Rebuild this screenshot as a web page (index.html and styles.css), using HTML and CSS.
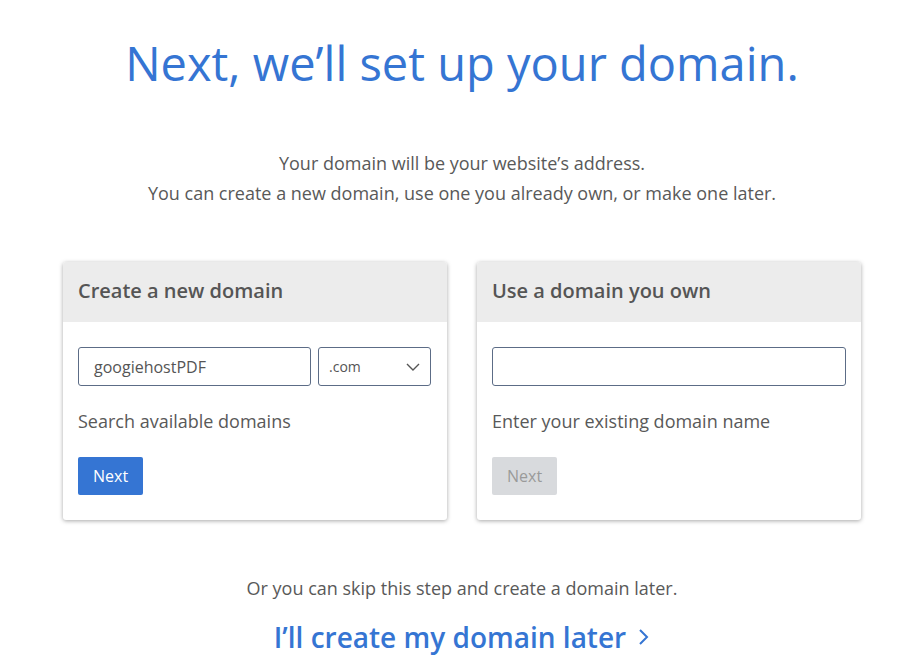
FILE: index.html
```html
<!DOCTYPE html>
<html lang="en">
<head>
<meta charset="utf-8">
<title>Set up your domain</title>
<link rel="stylesheet" href="styles.css">
</head>
<body>
<main class="page">
  <h1 class="title">Next, we’ll set up your domain.</h1>
  <p class="intro">Your domain will be your website’s address.<br>You can create a new domain, use one you already own, or make one later.</p>
  <div class="cards">
    <section class="card">
      <header class="card-head">Create a new domain</header>
      <div class="card-body">
        <div class="row">
          <div class="input name">googiehostPDF</div>
          <div class="input select"><span>.com</span>
            <svg class="chev" width="14" height="8" viewBox="0 0 14 8"><path d="M1 1l6 6 6-6" fill="none" stroke="#555" stroke-width="1.4"/></svg>
          </div>
        </div>
        <p class="hint">Search available domains</p>
        <button class="btn primary">Next</button>
      </div>
    </section>
    <section class="card">
      <header class="card-head">Use a domain you own</header>
      <div class="card-body">
        <div class="row">
          <div class="input full"></div>
        </div>
        <p class="hint">Enter your existing domain name</p>
        <button class="btn disabled">Next</button>
      </div>
    </section>
  </div>
  <p class="skip">Or you can skip this step and create a domain later.</p>
  <a class="later" href="#">I’ll create my domain later <svg class="arrow" width="12" height="18" viewBox="0 0 12 18"><path d="M2 2l7 7-7 7" fill="none" stroke="#3575d3" stroke-width="2"/></svg></a>
</main>
</body>
</html>
```
FILE: styles.css
```css
* { box-sizing: border-box; }
html, body { margin: 0; background: #fff; }
body { font-family: "Open Sans", "Liberation Sans", sans-serif; color: #595959; }
.page { display: flex; flex-direction: column; align-items: center; padding-top: 30px; }
.title { margin: 0; font-weight: 400; font-size: 47px; line-height: 66px; color: #3575d3; letter-spacing: 0; }
.intro { margin: 52px 0 0; text-align: center; font-size: 18px; line-height: 30px; color: #595959; }
.cards { display: flex; gap: 30px; margin-top: 54px; }
.card { width: 384px; background: #fff; border-radius: 3px; box-shadow: 0 1px 4px rgba(0,0,0,0.35); overflow: hidden; }
.card-head { height: 60px; background: #ececec; padding: 0 15px 3px; display: flex; align-items: center; font-size: 20px; font-weight: 600; color: #555; }
.card-body { padding: 25px 15px 25px; }
.row { display: flex; gap: 7px; height: 39px; }
.input { border: 1px solid #5c6c86; border-radius: 3px; height: 39px; display: flex; align-items: center; font-size: 16px; color: #555; }
.name { width: 233px; padding-left: 15px; }
.select { width: 113px; padding: 0 10px; justify-content: space-between; font-size: 14px; }
.full { width: 354px; }
.hint { margin: 0; padding-top: 22px; font-size: 18px; line-height: 26px; color: #595959; }
.btn { margin-top: 23px; height: 38px; padding: 0 15px; border: 0; border-radius: 2px; font-family: inherit; font-size: 16px; }
.primary { background: #3575d3; color: #fff; }
.disabled { background: #d8dadd; color: #9a9a9a; }
.skip { margin: 55px 0 0; font-size: 18px; line-height: 26px; color: #595959; }
.later { margin-top: 18px; font-size: 28px; font-weight: 600; color: #3575d3; text-decoration: none; display: flex; align-items: center; gap: 12px; line-height: 36px; }
```
